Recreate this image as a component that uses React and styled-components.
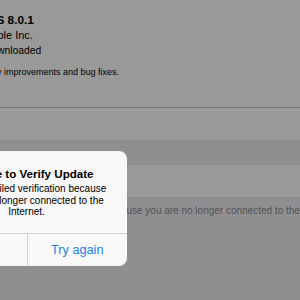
import React from "react";
import styled, { createGlobalStyle } from "styled-components";

const Global = createGlobalStyle`
  html, body { margin: 0; padding: 0; background: #efeff4; }
  body { font-family: "Liberation Sans", Arial, sans-serif; }
  * { box-sizing: border-box; }
`;

const Screen = styled.div`
  position: relative;
  width: 300px;
  height: 300px;
  overflow: hidden;
  background: #efeff4;
  color: #000;
`;

const Section = styled.div`
  background: #fff;
  border-top: ${(p) => (p.$top ? "1px solid #e6e6ea" : "none")};
  border-bottom: 1px solid #e6e6ea;
`;

const InfoCell = styled.div`
  height: 108px;
  padding-top: 12.5px;
  border-bottom: 1px solid #c8c7cc;
  white-space: nowrap;
`;

const Info = styled.div`
  display: flex;
  flex-direction: column;
  margin-left: -16px;
`;

const Name = styled.div`
  font-size: 11.8px;
  font-weight: 700;
  line-height: 15px;
`;

const Line = styled.div`
  font-size: ${(p) => p.$size}px;
  line-height: 15px;
`;

const Notes = styled.p`
  margin: 8px 0 0 -114px;
  font-size: 9px;
  line-height: 12px;
`;

const Cell = styled.div`
  height: ${(p) => p.$h}px;
  display: flex;
  align-items: center;
  margin-left: -16px;
  font-size: 12px;
  color: #007aff;
`;

const Gap = styled.div`
  height: 23px;
`;

const Footer = styled.p`
  margin: 0 0 0 -17px;
  padding-top: 7px;
  font-size: 10px;
  line-height: 12px;
  color: #8a8a8f;
  white-space: nowrap;
`;

const Dim = styled.div`
  position: absolute;
  inset: 0;
  background: rgba(0, 0, 0, 0.4);
`;

const Alert = styled.div`
  position: absolute;
  left: -74px;
  top: 151px;
  width: 201px;
  background: #f8f8f8;
  border-radius: 8px;
  display: flex;
  flex-direction: column;
  overflow: hidden;
`;

const AlertBody = styled.div`
  padding: 14.5px 16px 14.5px;
  display: flex;
  flex-direction: column;
  align-items: center;
  text-align: center;
`;

const AlertTitle = styled.div`
  padding-left: 4px;
  font-size: 11.6px;
  font-weight: 700;
  line-height: 15px;
  white-space: nowrap;
`;

const AlertMessage = styled.div`
  margin-top: 2.4px;
  font-size: 10px;
  line-height: 11.8px;
  white-space: nowrap;
`;

const Buttons = styled.div`
  display: grid;
  grid-template-columns: 1fr 1fr;
  border-top: 1px solid #d4d4d8;
  height: 33px;
`;

const AlertButton = styled.div`
  display: flex;
  align-items: center;
  justify-content: center;
  font-size: 12.7px;
  color: #1f82e0;
  border-left: ${(p) => (p.$divider ? "1px solid #d4d4d8" : "none")};
`;

export default function App() {
  return (
    <>
      <Global />
      <Screen>
        <Section>
          <InfoCell>
            <Info>
              <Name>iOS 8.0.1</Name>
              <Line $size={11}>Apple Inc.</Line>
              <Line $size={10.3}>Downloaded</Line>
            </Info>
            <Notes>This update contains stability improvements and bug fixes.</Notes>
          </InfoCell>
          <Cell $h={32} />
        </Section>
        <Gap />
        <Section $top>
          <Cell $h={32}>Install Now</Cell>
        </Section>
        <Footer>
          iOS 8.0.1 failed verification because you are no longer connected to the Internet.
        </Footer>
        <Dim />
        <Alert>
          <AlertBody>
            <AlertTitle>Unable to Verify Update</AlertTitle>
            <AlertMessage>
              iOS 8.0.1 failed verification because
              <br />
              you are no longer connected to the
              <br />
              Internet.
            </AlertMessage>
          </AlertBody>
          <Buttons>
            <AlertButton>OK</AlertButton>
            <AlertButton $divider>Try again</AlertButton>
          </Buttons>
        </Alert>
      </Screen>
    </>
  );
}
